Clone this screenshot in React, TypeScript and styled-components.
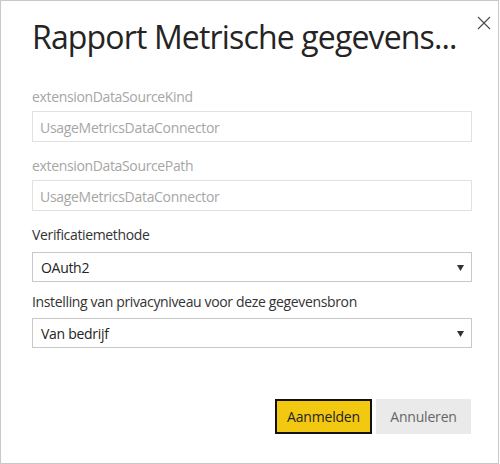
import React from "react";
import styled, { createGlobalStyle } from "styled-components";

const Global = createGlobalStyle`
  html, body { margin: 0; padding: 0; background: #ffffff; }
  * { box-sizing: border-box; }
  body { font-family: "Open Sans", "Noto Sans", sans-serif; }
`;

const Dialog = styled.div`
  position: relative;
  width: 499px;
  height: 464px;
  border: 1px solid #c8c8c8;
  background: #fff;
  padding: 16px 27px 0 31px;
  display: flex;
  flex-direction: column;
`;

const CloseButton = styled.button`
  position: absolute;
  top: 14px;
  right: 6px;
  width: 16px;
  height: 16px;
  padding: 0;
  border: none;
  background: transparent;
  display: flex;
  align-items: center;
  justify-content: center;
  cursor: pointer;
`;

const Title = styled.h1`
  margin: 0 0 30px 0;
  font-family: "Open Sans", "Noto Sans", sans-serif;
  font-weight: 400;
  font-size: 32px;
  line-height: 40px;
  color: #252423;
  letter-spacing: -0.85px;
  white-space: nowrap;
`;

const Field = styled.div<{ $gap: number; $after: number }>`
  display: flex;
  flex-direction: column;
  gap: ${(p) => p.$gap}px;
  margin-bottom: ${(p) => p.$after}px;
`;

const Label = styled.label<{ $muted?: boolean }>`
  font-size: 14px;
  line-height: 20px;
  color: ${(p) => (p.$muted ? "#a6a6a6" : "#333333")};
  letter-spacing: -0.35px;
  white-space: nowrap;
`;

const TextBox = styled.div`
  height: 31px;
  width: 440px;
  border: 1px solid #e1e1e1;
  padding: 2px 8px 0 7px;
  display: flex;
  align-items: center;
  font-size: 14px;
  line-height: 20px;
  color: #a6a6a6;
  letter-spacing: -0.3px;
`;

const Select = styled.div`
  height: 30px;
  width: 440px;
  border: 1px solid #c8c8c8;
  padding: 1px 7px 0 8px;
  display: flex;
  align-items: center;
  justify-content: space-between;
  font-size: 14px;
  line-height: 20px;
  color: #252423;
  letter-spacing: -0.3px;
`;

const Footer = styled.div`
  margin-top: auto;
  margin-bottom: 29px;
  display: flex;
  justify-content: flex-end;
  gap: 4px;
`;

const Button = styled.button<{ $primary?: boolean }>`
  height: 35px;
  width: ${(p) => (p.$primary ? "97px" : "95px")};
  font-family: "Open Sans", "Noto Sans", sans-serif;
  font-size: 14px;
  letter-spacing: -0.2px;
  padding: 0;
  cursor: pointer;
  background: ${(p) => (p.$primary ? "#f2c811" : "#eaeaea")};
  color: ${(p) => (p.$primary ? "#252423" : "#666666")};
  border: ${(p) => (p.$primary ? "2px solid #111111" : "1px solid #eaeaea")};
  box-shadow: ${(p) => (p.$primary ? "inset 0 0 0 1px #f2c811" : "none")};
`;

const Arrow = () => (
  <svg width="7" height="6" viewBox="0 0 7 6">
    <polygon points="0,0 7,0 3.5,6" fill="#333333" />
  </svg>
);

export default function App() {
  return (
    <>
      <Global />
      <Dialog>
        <CloseButton aria-label="Sluiten">
          <svg width="14" height="14" viewBox="0 0 14 14">
            <path d="M1 1 L13 13 M13 1 L1 13" stroke="#4a4a4a" strokeWidth="1.1" fill="none" />
          </svg>
        </CloseButton>
        <Title>Rapport Metrische gegevens...</Title>
        <Field $gap={4} $after={14}>
          <Label $muted>extensionDataSourceKind</Label>
          <TextBox>UsageMetricsDataConnector</TextBox>
        </Field>
        <Field $gap={4} $after={14}>
          <Label $muted>extensionDataSourcePath</Label>
          <TextBox>UsageMetricsDataConnector</TextBox>
        </Field>
        <Field $gap={7} $after={10}>
          <Label>Verificatiemethode</Label>
          <Select>
            <span>OAuth2</span>
            <Arrow />
          </Select>
        </Field>
        <Field $gap={6} $after={0}>
          <Label>Instelling van privacyniveau voor deze gegevensbron</Label>
          <Select>
            <span>Van bedrijf</span>
            <Arrow />
          </Select>
        </Field>
        <Footer>
          <Button $primary>Aanmelden</Button>
          <Button>Annuleren</Button>
        </Footer>
      </Dialog>
    </>
  );
}
